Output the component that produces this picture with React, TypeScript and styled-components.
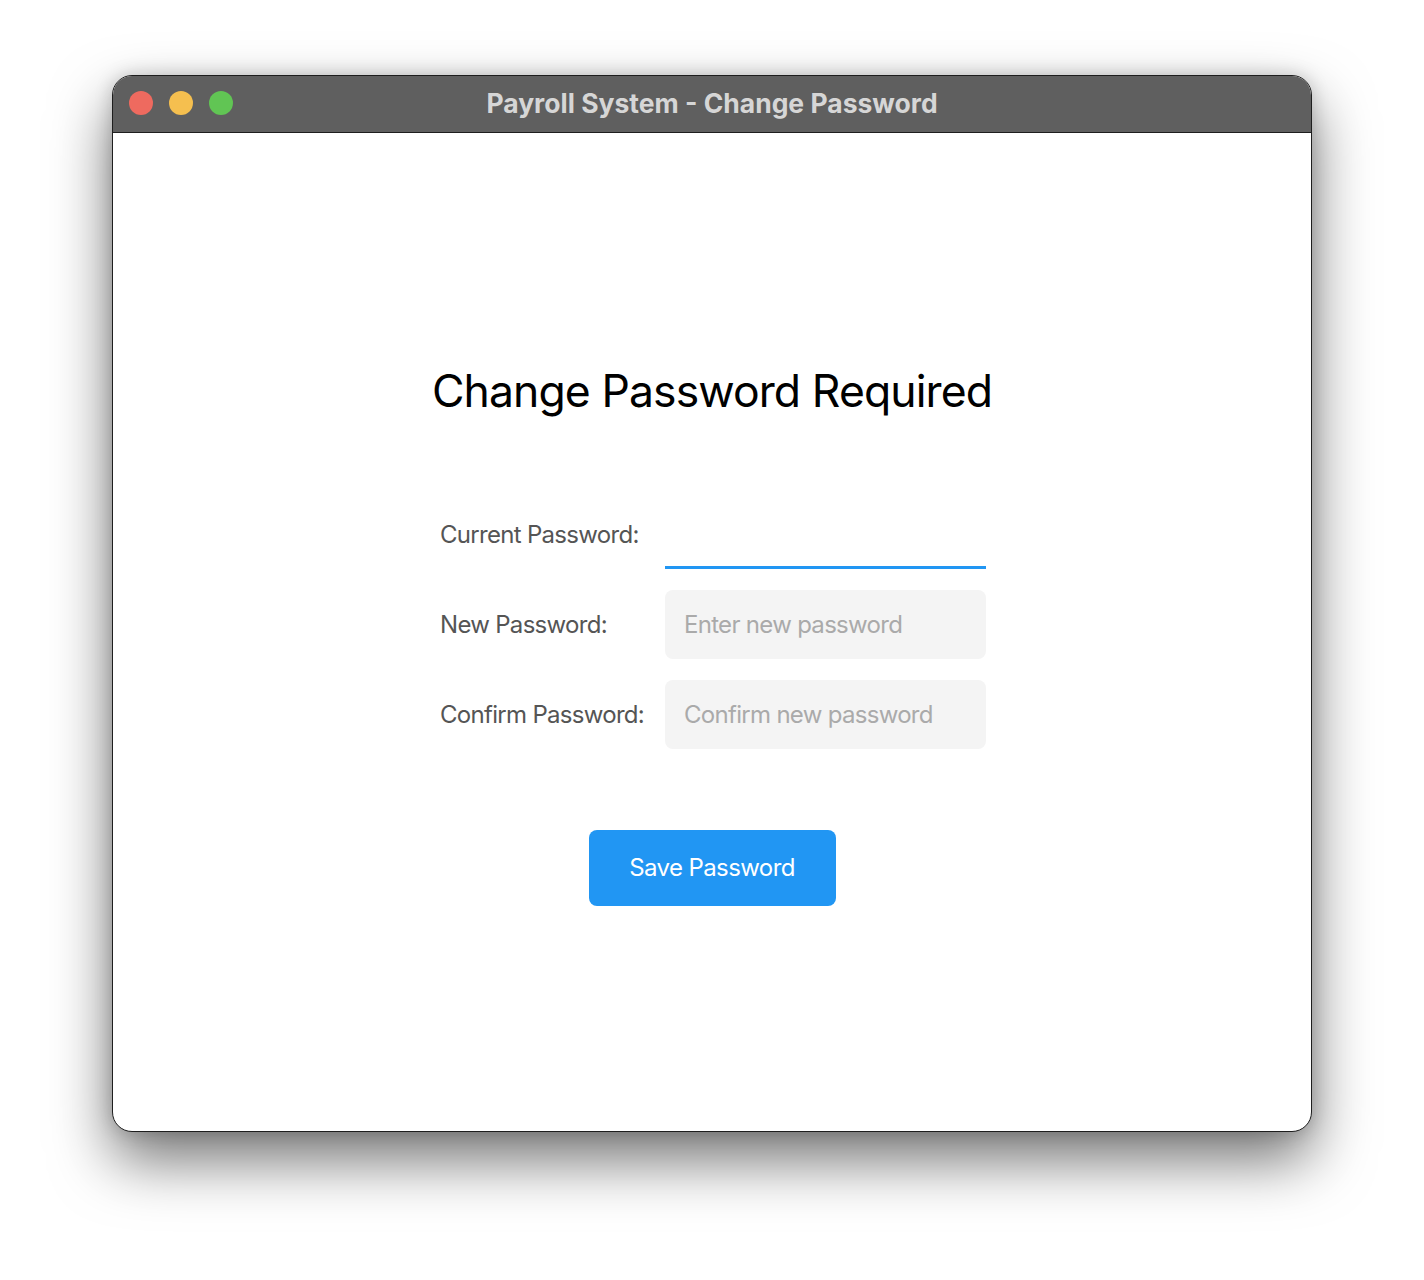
import * as React from 'react';
import styled, { createGlobalStyle } from 'styled-components';

const GlobalStyle = createGlobalStyle`
	html, body {
		margin: 0;
		padding: 0;
		background: #ffffff;
	}
	body {
		font-family: Inter, "Noto Sans", "Liberation Sans", sans-serif;
	}
	* {
		box-sizing: border-box;
	}
`;

const Stage = styled.div`
	width: 1424px;
	height: 1280px;
	padding: 75px 112px 0;
	background: #ffffff;
`;

const Window = styled.div`
	width: 1200px;
	height: 1057px;
	border: 1px solid #1e1e1e;
	border-radius: 20px;
	overflow: hidden;
	display: flex;
	flex-direction: column;
	background: #ffffff;
	box-shadow: 0 28px 60px rgba(0, 0, 0, 0.55), 0 0 18px rgba(0, 0, 0, 0.18);
`;

const TitleBar = styled.div`
	position: relative;
	height: 57px;
	flex: none;
	background: #5f5f5f;
	border-bottom: 1px solid #1e1e1e;
	display: flex;
	align-items: center;
	justify-content: center;
	padding-bottom: 3px;
`;

const Lights = styled.div`
	position: absolute;
	left: 16px;
	top: 15px;
	display: flex;
	gap: 16px;
`;

const Light = styled.span<{ $color: string }>`
	width: 24px;
	height: 24px;
	border-radius: 50%;
	background: ${p => p.$color};
`;

const Title = styled.div`
	font-weight: 700;
	font-size: 26.5px;
	color: #d6d6d6;
	letter-spacing: 0;
`;

const Content = styled.div`
	flex: 1;
	display: flex;
	flex-direction: column;
	align-items: center;
	justify-content: center;
	padding-top: 5px;
`;

const Heading = styled.h1`
	margin: 0 0 82px;
	font-weight: 400;
	font-size: 44.5px;
	letter-spacing: -0.9px;
	color: #000000;
`;

const Form = styled.div`
	display: grid;
	grid-template-columns: 205px 321px;
	column-gap: 20px;
	row-gap: 21px;
	align-items: center;
	margin-left: 2px;
`;

const Label = styled.label`
	font-size: 24px;
	letter-spacing: -0.7px;
	color: #555555;
	white-space: nowrap;
`;

const Input = styled.input<{ $focused?: boolean }>`
	width: 321px;
	height: 69px;
	border: none;
	border-radius: ${p => (p.$focused ? '0' : '8px')};
	background: ${p => (p.$focused ? 'transparent' : '#f4f4f4')};
	border-bottom: ${p => (p.$focused ? '3px solid #2196f3' : 'none')};
	padding: 0 19px;
	font-family: inherit;
	font-size: 24px;
	letter-spacing: -0.7px;
	color: #333333;
	outline: none;

	&::placeholder {
		color: #aaaaaa;
	}
`;

const SaveButton = styled.button`
	margin-top: 81px;
	width: 247px;
	height: 76px;
	border: none;
	border-radius: 8px;
	background: #2196f3;
	color: #ffffff;
	font-family: inherit;
	font-size: 24px;
	letter-spacing: -0.6px;
	cursor: pointer;
`;

export default function App() {
	return (
		<Stage>
			<GlobalStyle />
			<Window>
				<TitleBar>
					<Lights>
						<Light $color="#ee6a5f" />
						<Light $color="#f5bf4f" />
						<Light $color="#61c554" />
					</Lights>
					<Title>Payroll System - Change Password</Title>
				</TitleBar>
				<Content>
					<Heading>Change Password Required</Heading>
					<Form>
						<Label>Current Password:</Label>
						<Input type="password" $focused />
						<Label>New Password:</Label>
						<Input type="password" placeholder="Enter new password" />
						<Label>Confirm Password:</Label>
						<Input type="password" placeholder="Confirm new password" />
					</Form>
					<SaveButton>Save Password</SaveButton>
				</Content>
			</Window>
		</Stage>
	);
}
